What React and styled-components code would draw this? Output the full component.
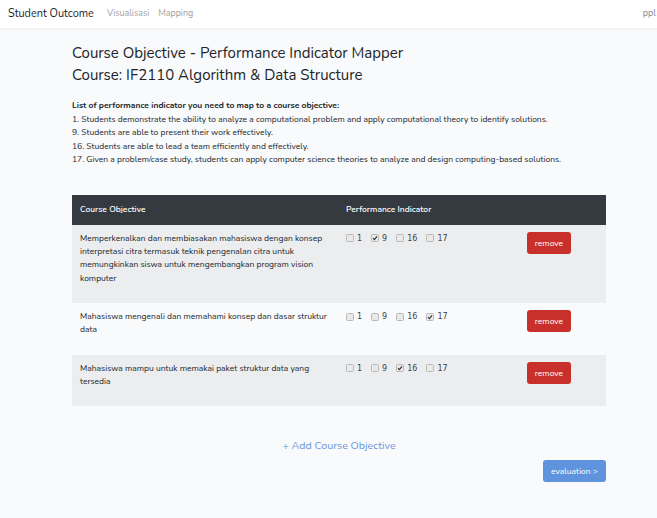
import React from "react";
import styled, { createGlobalStyle } from "styled-components";

const Global = createGlobalStyle`
  html, body { margin: 0; padding: 0; background: #f8fafc; }
  body { font-family: "Nunito", Lato, "Open Sans", sans-serif; color: #212529; }
  * { box-sizing: border-box; }
`;

const Nav = styled.nav`
  height: 28px;
  background: #fff;
  box-shadow: 0 1px 3px rgba(0,0,0,0.06);
  display: flex;
  align-items: center;
  padding: 0 0 2px 8px;
`;
const Brand = styled.div`
  font-size: 10.9px;
  color: #212529;
  margin-right: 13px;
`;
const NavLink = styled.a`
  font-size: 8.9px;
  color: #a0a0a0;
  margin-right: 9px;
  text-decoration: none;
`;
const NavRight = styled.div`
  margin-left: auto;
  font-size: 9px;
  color: #888;
  padding-right: 1px;
`;

const Container = styled.main`
  width: 534px;
  margin: 0 0 0 72px;
  padding-top: 14px;
`;
const Title = styled.h1`
  font-size: 15px;
  font-weight: 400;
  line-height: 22px;
  margin: 0 0 13px 0;
`;
const Intro = styled.div`
  font-size: 8.5px;
  line-height: 13.5px;
  margin-bottom: 28px;
`;
const IntroHead = styled.div`
  font-weight: 700;
`;

const Table = styled.div`
  width: 100%;
  font-size: 8.5px;
  line-height: 13.3px;
`;
const Row = styled.div`
  display: grid;
  grid-template-columns: 266px 181px 1fr;
  background: ${(p) => (p.$head ? "#343a40" : p.$odd ? "#ebedef" : "#f8fafc")};
  color: ${(p) => (p.$head ? "#fff" : "#212529")};
`;
const HeadCell = styled.div`
  padding: 8px 8px 9px;
  font-weight: 600;
`;
const Cell = styled.div`
  padding: 7px 8px 8px;
`;
const Desc = styled.p`
  margin: 0 0 10px 0;
`;
const Checks = styled.div`
  display: flex;
  align-items: center;
  font-family: "DejaVu Sans", Verdana, sans-serif;
  font-size: 8px;
  color: #444;
`;
const CheckItem = styled.label`
  display: flex;
  align-items: center;
  margin-right: 9px;
`;
const Box = styled.span`
  width: 8px;
  height: 8px;
  border: 1px solid #b9b9b9;
  border-radius: 1.5px;
  background: #e9e9e9;
  margin-right: 3px;
  display: inline-flex;
  align-items: center;
  justify-content: center;
`;
const RemoveBtn = styled.button`
  width: 44px;
  height: 22px;
  border: none;
  border-radius: 3px;
  background: #c9302c;
  color: #fff;
  font-family: inherit;
  font-size: 8.5px;
  padding: 0;
`;

const AddLink = styled.div`
  text-align: center;
  color: #6c96d8;
  font-size: 10.7px;
  margin-top: 32px;
`;
const Footer = styled.div`
  display: flex;
  justify-content: flex-end;
  margin-top: 7px;
`;
const EvalBtn = styled.button`
  width: 63px;
  height: 22px;
  border: none;
  border-radius: 3px;
  background: #5f93dd;
  color: #fff;
  font-family: inherit;
  font-size: 8.5px;
  padding: 0;
`;

const Tick = () => (
  <svg width="6" height="6" viewBox="0 0 6 6">
    <path d="M1 3.2 L2.4 4.6 L5 1.3" stroke="#333" strokeWidth="1.1" fill="none" />
  </svg>
);

const Check = ({ label, checked }) => (
  <CheckItem>
    <Box>{checked && <Tick />}</Box>
    {label}
  </CheckItem>
);

const rows = [
  {
    text: "Memperkenalkan dan membiasakan mahasiswa dengan konsep interpretasi citra termasuk teknik pengenalan citra untuk memungkinkan siswa untuk mengembangkan program vision komputer",
    checked: "9",
  },
  { text: "Mahasiswa mengenali dan memahami konsep dan dasar struktur data", checked: "17" },
  { text: "Mahasiswa mampu untuk memakai paket struktur data yang tersedia", checked: "16" },
];

export default function App() {
  return (
    <>
      <Global />
      <Nav>
        <Brand>Student Outcome</Brand>
        <NavLink>Visualisasi</NavLink>
        <NavLink>Mapping</NavLink>
        <NavRight>ppl</NavRight>
      </Nav>
      <Container>
        <Title>
          Course Objective - Performance Indicator Mapper
          <br />
          Course: IF2110 Algorithm &amp; Data Structure
        </Title>
        <Intro>
          <IntroHead>List of performance indicator you need to map to a course objective:</IntroHead>
          <div>1. Students demonstrate the ability to analyze a computational problem and apply computational theory to identify solutions.</div>
          <div>9. Students are able to present their work effectively.</div>
          <div>16. Students are able to lead a team efficiently and effectively.</div>
          <div>17. Given a problem/case study, students can apply computer science theories to analyze and design computing-based solutions.</div>
        </Intro>
        <Table>
          <Row $head>
            <HeadCell>Course Objective</HeadCell>
            <HeadCell>Performance Indicator</HeadCell>
            <HeadCell />
          </Row>
          {rows.map((r, i) => (
            <Row key={i} $odd={i % 2 === 0}>
              <Cell>
                <Desc>{r.text}</Desc>
              </Cell>
              <Cell>
                <Checks>
                  {["1", "9", "16", "17"].map((n) => (
                    <Check key={n} label={n} checked={n === r.checked} />
                  ))}
                </Checks>
              </Cell>
              <Cell>
                <RemoveBtn>remove</RemoveBtn>
              </Cell>
            </Row>
          ))}
        </Table>
        <AddLink>+ Add Course Objective</AddLink>
        <Footer>
          <EvalBtn>evaluation &gt;</EvalBtn>
        </Footer>
      </Container>
    </>
  );
}
